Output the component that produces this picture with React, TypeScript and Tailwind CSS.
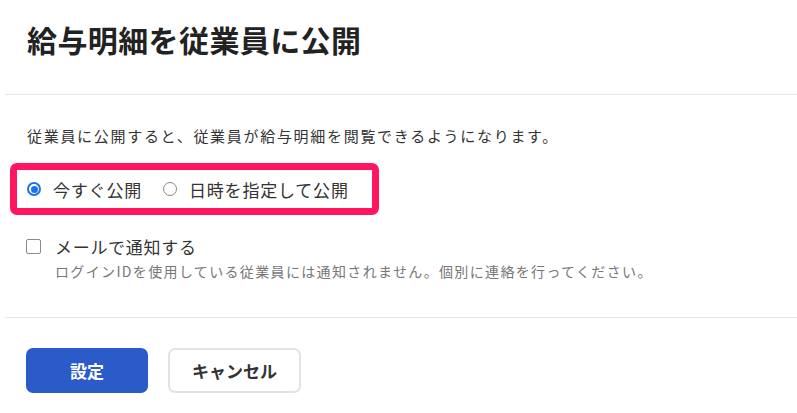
const Radio = ({ checked }: { checked?: boolean }) =>
  checked ? (
    <span className="w-[14px] h-[14px] rounded-full border-2 border-[#1a73e8] flex items-center justify-center shrink-0">
      <span className="w-[7px] h-[7px] rounded-full bg-[#1a73e8]"></span>
    </span>
  ) : (
    <span className="w-[14px] h-[14px] rounded-full border border-[#8a8a8a] shrink-0"></span>
  );

const App = () => {
  return (
    <div className="w-[797px] h-[413px] bg-white text-[#333] font-['Noto_Sans_CJK_JP',sans-serif]">
      {/* Header */}
      <div className="h-[94px] pt-[24px] pl-[27px]">
        <h1 className="text-[30px] leading-[30px] font-bold tracking-[0.4px] text-[#222]">給与明細を従業員に公開</h1>
      </div>
      <div className="ml-[5px] h-px bg-[#e6e6e6]"></div>

      {/* Body */}
      <div className="pt-[33px]">
        <p className="pl-[27px] text-[15px] leading-[16px] tracking-[1.7px] text-[#333]">
          従業員に公開すると、従業員が給与明細を閲覧できるようになります。
        </p>

        <div className="mt-[19px] ml-[10px] w-[369px] h-[52px] border-[7px] border-[#ff1560] rounded-[7px] flex items-center pl-[10px]">
          <label className="flex items-center">
            <Radio checked />
            <span className="ml-[12px] text-[17px] leading-[17px] tracking-[0.8px]">今すぐ公開</span>
          </label>
          <label className="flex items-center ml-[21px]">
            <Radio />
            <span className="ml-[12px] text-[17px] leading-[17px] tracking-[0.8px]">日時を指定して公開</span>
          </label>
        </div>

        <div className="mt-[23px] pl-[26px] flex items-start">
          <span className="mt-[1px] w-[15px] h-[15px] rounded-[2px] border border-[#8a8a8a] shrink-0"></span>
          <div className="ml-[14px]">
            <div className="text-[17px] leading-[17px] tracking-[0.7px]">メールで通知する</div>
            <div className="mt-[9px] text-[14px] leading-[15px] tracking-[1.35px] text-[#777]">
              ログインIDを使用している従業員には通知されません。個別に連絡を行ってください。
            </div>
          </div>
        </div>
      </div>

      <div className="mt-[38px] ml-[5px] h-px bg-[#e6e6e6]"></div>

      {/* Footer */}
      <div className="mt-[30px] pl-[26px] flex gap-[20px]">
        <button className="w-[122px] h-[45px] rounded-[7px] bg-[#2a5bc8] text-white text-[17px] font-bold">
          設定
        </button>
        <button className="w-[133px] h-[45px] rounded-[7px] bg-white border-2 border-[#e3e3e3] text-[#333] text-[17px] font-bold">
          キャンセル
        </button>
      </div>
    </div>
  );
};

export default App;
